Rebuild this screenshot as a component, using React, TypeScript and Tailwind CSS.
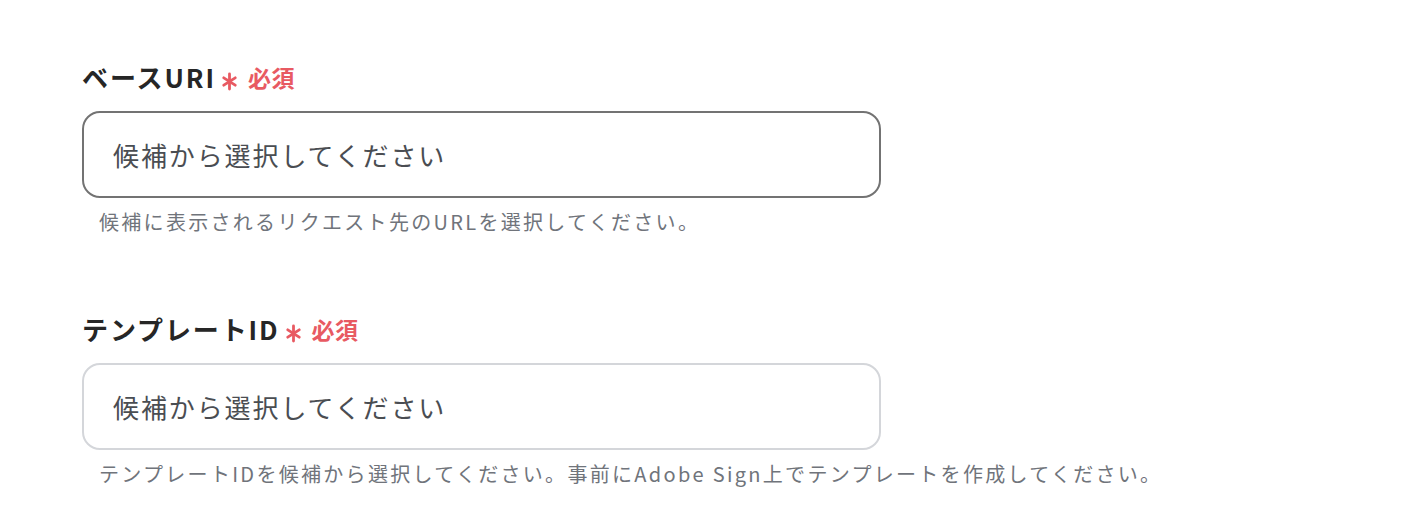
import React from "react";

const font = { fontFamily: '"Noto Sans CJK JP", "Noto Sans", sans-serif' };

function Asterisk() {
  return (
    <svg width="15" height="19" viewBox="0 0 15 19" className="mt-[8px]">
      <g stroke="#e85a62" strokeWidth="2.8" strokeLinecap="round">
        <line x1="7.5" y1="2" x2="7.5" y2="17" />
        <line x1="1.8" y1="5.8" x2="13.2" y2="13.2" />
        <line x1="13.2" y1="5.8" x2="1.8" y2="13.2" />
      </g>
    </svg>
  );
}

function Field({
  label,
  help,
  active,
}: {
  label: string;
  help: string;
  active?: boolean;
}) {
  return (
    <div className="flex flex-col">
      <div className="flex items-center h-[32px]">
        <span className="text-[26px] font-bold text-[#262626] leading-none tracking-[1.9px]">
          {label}
        </span>
        <span className="ml-[6px] flex items-center">
          <Asterisk />
        </span>
        <span className="ml-[11px] text-[23px] font-bold text-[#e85a62] leading-none tracking-[0.5px]">
          必須
        </span>
      </div>
      <div
        className={
          "mt-[18px] w-[799px] h-[87px] rounded-[18px] bg-white flex items-center pl-[29px] " +
          (active ? "border-2 border-[#737373]" : "border-2 border-[#d4d6da]")
        }
      >
        <span className="text-[26px] text-[#4a4d52] tracking-[1.9px] leading-none">
          候補から選択してください
        </span>
      </div>
      <div className="mt-[9px] h-[30px] flex items-center pl-[17px]">
        <span className="text-[20px] text-[#70747b] tracking-[2.3px] leading-none">
          {help}
        </span>
      </div>
    </div>
  );
}

export default function App() {
  return (
    <div className="w-[1412px] h-[528px] bg-white overflow-hidden" style={font}>
      <div className="pl-[82px] pt-[61px] flex flex-col gap-[76px]">
        <Field
          label="ベースURI"
          help="候補に表示されるリクエスト先のURLを選択してください。"
          active
        />
        <Field
          label="テンプレートID"
          help="テンプレートIDを候補から選択してください。事前にAdobe Sign上でテンプレートを作成してください。"
        />
      </div>
    </div>
  );
}
